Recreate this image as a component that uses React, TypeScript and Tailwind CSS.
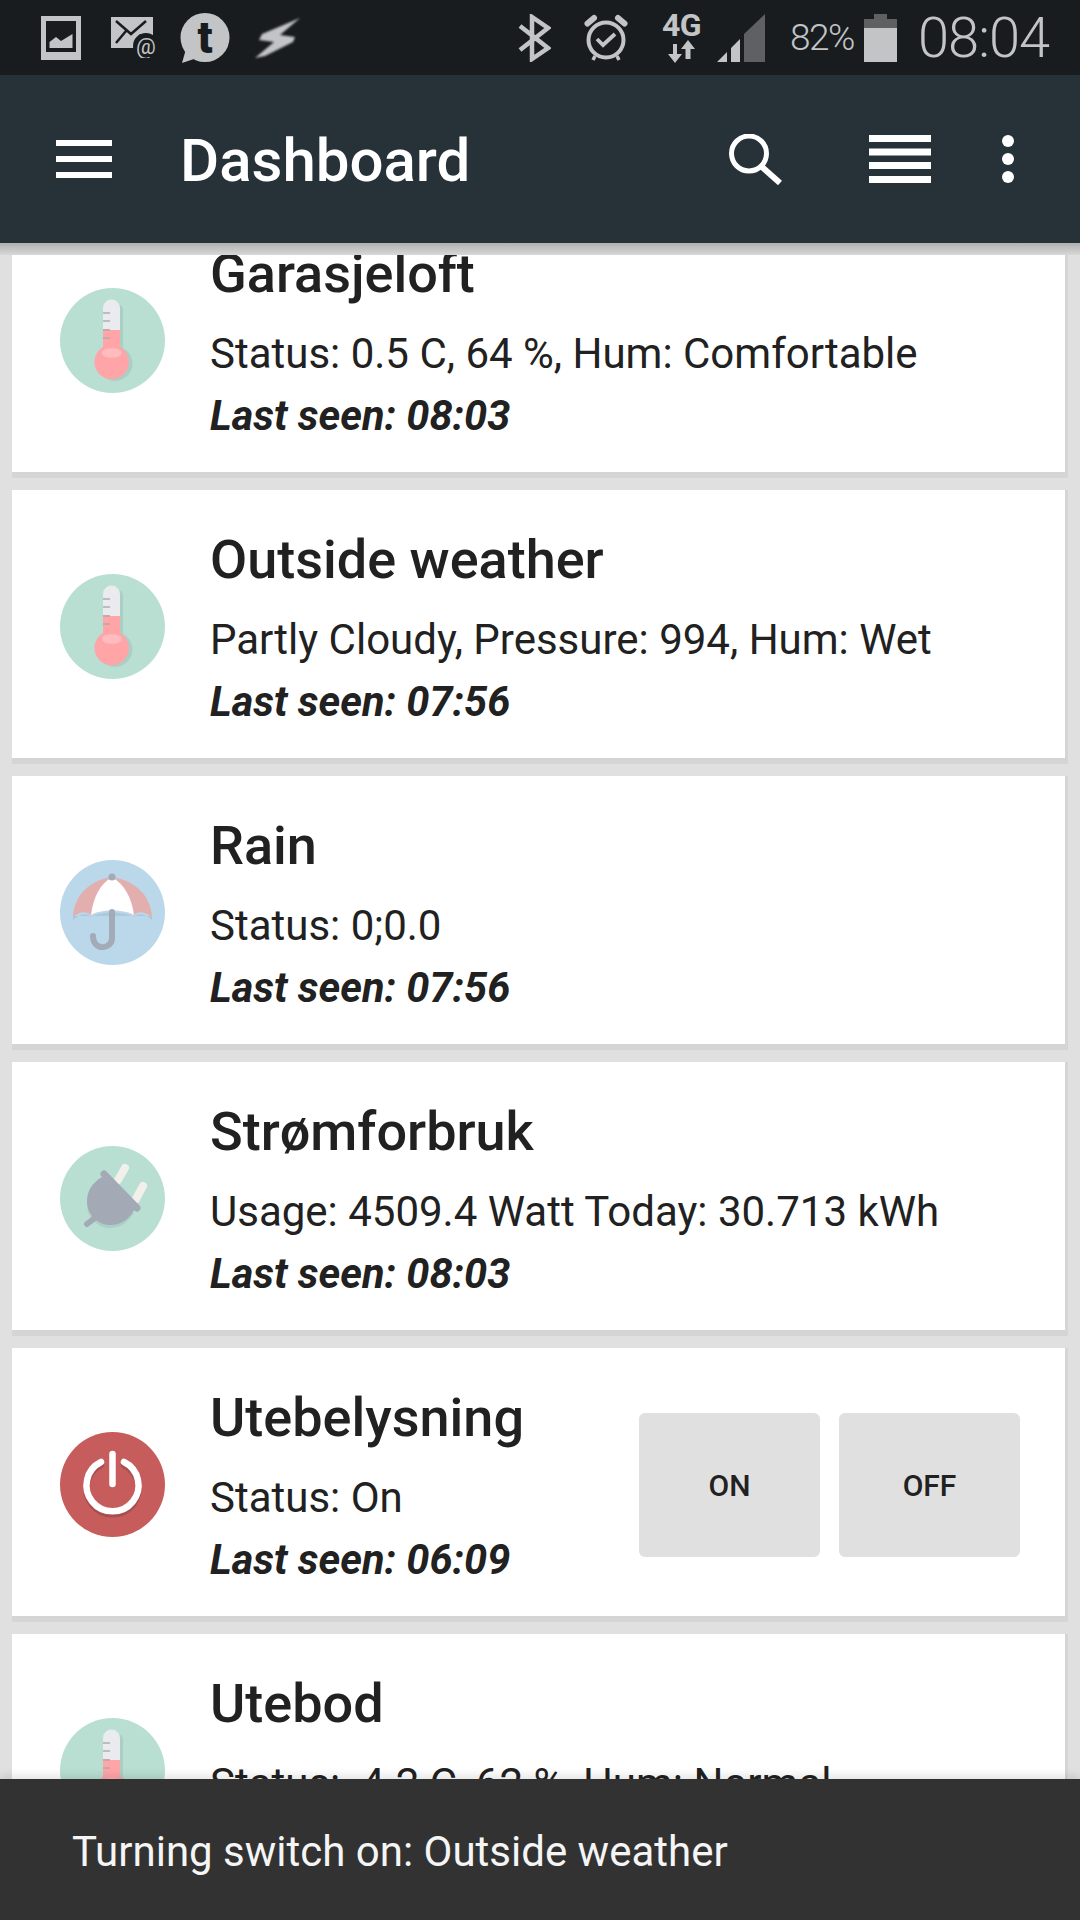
const font = { fontFamily: "Roboto, sans-serif" };

function Thermometer() {
  return (
    <svg viewBox="0 0 105 105" className="h-full w-full">
      <circle cx="52.5" cy="52.5" r="52.5" fill="#b9dfd3" />
      <path d="M47 20a9 9 0 0 1 16 0V60a17.5 17.5 0 1 1-16 0Z" fill="#a6c8bf" opacity="0.7" />
      <path d="M43 20a8.5 8.5 0 0 1 17 0V42H43Z" fill="#e9ebef" />
      <rect x="43" y="42" width="17" height="20" fill="#ffa5a8" />
      <circle cx="51.7" cy="74" r="17.3" fill="#ffa5a8" />
      <ellipse cx="51.7" cy="65" rx="10" ry="4.8" fill="#ffbcbf" />
      <g fill="#bdbcc2">
        <rect x="43" y="24" width="7" height="2" />
        <rect x="43" y="32" width="7" height="2" />
        <rect x="43" y="41" width="7" height="2" fill="#c9a6aa" />
        <rect x="43" y="49" width="7" height="2" fill="#c9a6aa" />
      </g>
    </svg>
  );
}

function Umbrella() {
  return (
    <svg viewBox="0 0 105 105" className="h-full w-full">
      <circle cx="52.5" cy="52.5" r="52.5" fill="#bbd8ea" />
      <path d="M13 60C22 53 28 53 31 57C40 51 64 51 74 57C78 53 84 53 92 60V56H13Z" fill="#a9cadc" />
      <path d="M13 57C14 35 30 20 52 17C74 20 91 35 92 57C84 51 78 51 74 55C64 49 40 49 31 55C26 51 20 51 13 57Z" fill="#e3aeae" />
      <path d="M31 55C33 38 40 24 52 17C64 24 72 38 74 55C64 49 40 49 31 55Z" fill="#ffffff" />
      <path d="M52 52V78C52 90 33 91 33 76" fill="none" stroke="#a4abb8" strokeWidth="6" strokeLinecap="round" />
      <circle cx="52" cy="17" r="3.6" fill="#a4abb8" />
    </svg>
  );
}

function Plug() {
  return (
    <svg viewBox="0 0 105 105" className="h-full w-full">
      <circle cx="52.5" cy="52.5" r="52.5" fill="#b9dfd3" />
      <path d="M44 33C33 39 27 47 27 58C27 72 38 82 50 82C60 82 68 76 74 67Z" fill="#a6c8bf" opacity="0.7" />
      <path d="M58 34L65 22M76 53L83 40" stroke="#f2f0eb" strokeWidth="8" strokeLinecap="round" />
      <path d="M42 31C32 37 27 45 27 55C27 69 38 79 50 79C61 79 70 73 75 62Z" fill="#a4a9b6" />
      <path d="M44 28L77 62" stroke="#a4a9b6" strokeWidth="7" strokeLinecap="round" />
      <path d="M36 71L27 78" stroke="#a4a9b6" strokeWidth="6" strokeLinecap="round" />
    </svg>
  );
}

function Power() {
  return (
    <svg viewBox="0 0 105 105" className="h-full w-full">
      <circle cx="52.5" cy="52.5" r="52.5" fill="#c75c5c" />
      <path d="M41 33A26 26 0 1 0 64 33" fill="none" stroke="#a84e50" strokeWidth="6.5" strokeLinecap="round" />
      <path d="M41 30A26 26 0 1 0 64 30" fill="none" stroke="#ffffff" strokeWidth="6.5" strokeLinecap="round" />
      <path d="M52.5 22V52" stroke="#ffffff" strokeWidth="6.5" strokeLinecap="round" />
    </svg>
  );
}

function Card({
  icon,
  title,
  status,
  seen,
  buttons,
}: {
  icon: React.ReactNode;
  title: string;
  status: string;
  seen: string;
  buttons?: boolean;
}) {
  return (
    <div className="flex h-[274px] items-center border-r-[3px] border-b-[6px] border-[#d5d5d5] bg-white pl-[48px]">
      <div className="mt-[5px] h-[105px] w-[105px] shrink-0">{icon}</div>
      <div className="ml-[45px] h-full flex-1 pt-[40px] text-[#212121]">
        <div className="mb-[18px] text-[54px] leading-[60px] font-medium">{title}</div>
        <div className="text-[42px] leading-[64px]">{status}</div>
        <div className="text-[41.5px] leading-[60px] font-bold italic">Last seen: {seen}</div>
      </div>
      {buttons && (
        <div className="mt-[5px] mr-[45px] flex gap-[19px]">
          <button className="h-[144px] w-[181px] rounded-[6px] bg-[#e0e0e0] pt-[2px] text-[30px] font-medium text-[#212121]">ON</button>
          <button className="h-[144px] w-[181px] rounded-[6px] bg-[#e0e0e0] pt-[2px] text-[30px] font-medium text-[#212121]">OFF</button>
        </div>
      )}
    </div>
  );
}

function StatusBar() {
  return (
    <div className="flex h-[75px] shrink-0 items-center bg-[#181c1f] pl-[41px] text-[#c2c4c6]">
      <svg viewBox="0 0 40 44" className="h-[44px] w-[40px]">
        <path d="M0 0H40V44H0Z M5 5V36H35V5Z" fill="#c2c4c6" fillRule="evenodd" />
        <path d="M8.5 32V26L15 21L20 25L31.5 18V32Z" fill="#c2c4c6" />
      </svg>
      <svg viewBox="0 0 46 41" className="ml-[30px] h-[41px] w-[46px]">
        <rect width="42" height="31" fill="#c2c4c6" />
        <path d="M5 4L20 17L35 4M5 26L15 14M38 26L28 18" stroke="#181c1f" strokeWidth="2.5" fill="none" />
        <circle cx="35" cy="29" r="13" fill="#181c1f" />
        <text x="35" y="37" textAnchor="middle" fontSize="22" fill="#c2c4c6" fontFamily="Roboto">@</text>
      </svg>
      <svg viewBox="0 0 50 50" className="ml-[23px] h-[50px] w-[50px]">
        <circle cx="25" cy="24.5" r="24.5" fill="#c2c4c6" />
        <path d="M6 36L2 50L17 45Z" fill="#c2c4c6" />
        <text x="25" y="40" textAnchor="middle" fontSize="44" fontWeight="900" fill="#181c1f" fontFamily="Roboto">t</text>
      </svg>
      <svg viewBox="0 0 45 40" className="ml-[25px] h-[40px] w-[45px] blur-[0.8px]">
        <path d="M45 0L7 16L4 22L19 24L0 40L10 38L38 24L40 19L25 17Z" fill="#c2c4c6" />
      </svg>
      <svg viewBox="0 0 33 48" className="ml-[218px] h-[48px] w-[33px]" fill="none" stroke="#c2c4c6" strokeWidth="4.5">
        <path d="M2 12L30 34L14 45V3L30 14L2 36" />
      </svg>
      <svg viewBox="0 0 44 47" className="ml-[33px] h-[47px] w-[44px]" fill="none" stroke="#c2c4c6">
        <circle cx="22" cy="26" r="17.5" strokeWidth="4" />
        <path d="M13 25L19 31L31 20" strokeWidth="3.8" />
        <path d="M3.5 9.5L10 4M40.5 9.5L34 4" strokeWidth="6" strokeLinecap="round" />
        <path d="M11 42L9 46M33 42L35 46" strokeWidth="3.5" />
      </svg>
      <div className="ml-[34px] flex h-[52px] w-[39px] flex-col items-center">
        <div className="h-[28px] text-[32px] leading-[26px] font-bold tracking-[-0.5px]">4G</div>
        <svg viewBox="0 0 27 23" className="h-[23px] w-[27px]" fill="#c2c4c6">
          <path d="M5 4H9V14H14L7 23L0 14H5Z M20 0L27 9H22.5V19H17.5V9H13Z" />
        </svg>
      </div>
      <svg viewBox="0 0 48 48" className="ml-[16px] h-[48px] w-[48px]">
        <path d="M0 48L10 38V48Z M14 34L23 25V48H14Z" fill="#c2c4c6" />
        <path d="M27 20L48 0V48H27Z" fill="#5e6062" />
      </svg>
      <span className="ml-[25px] w-[64px] text-[37px] font-light tracking-[-1.5px] whitespace-nowrap">82%</span>
      <svg viewBox="0 0 33 48" className="ml-[10px] h-[48px] w-[33px]">
        <path d="M10 0H23V5H33V14H0V5H10Z" fill="#5e6062" />
        <rect x="0" y="14" width="33" height="34" fill="#c2c4c6" />
      </svg>
      <span className="ml-[21px] text-[56px] leading-none font-light tracking-[-1px]">08:04</span>
    </div>
  );
}

function AppBar() {
  return (
    <div className="flex h-[168px] shrink-0 items-center bg-[#273138] text-white">
      <svg viewBox="0 0 56 38" className="ml-[56px] h-[38px] w-[56px]" fill="#ffffff">
        <rect width="56" height="6" />
        <rect y="16" width="56" height="6" />
        <rect y="32" width="56" height="6" />
      </svg>
      <h1 className="ml-[68px] flex-1 pt-[4px] text-[60px] font-medium">Dashboard</h1>
      <svg viewBox="0 0 53 51" className="h-[51px] w-[53px]" fill="none" stroke="#ffffff">
        <circle cx="20" cy="19.5" r="17.5" strokeWidth="5" />
        <path d="M33 33L51 49" strokeWidth="6" />
      </svg>
      <svg viewBox="0 0 62 48" className="ml-[87px] h-[48px] w-[62px]" fill="#ffffff">
        <rect width="62" height="7" />
        <rect y="13.5" width="62" height="7" />
        <rect y="27" width="62" height="7" />
        <rect y="41" width="62" height="7" />
      </svg>
      <svg viewBox="0 0 12 48" className="mr-[66px] ml-[71px] h-[48px] w-[12px]" fill="#ffffff">
        <circle cx="6" cy="6" r="6" />
        <circle cx="6" cy="24" r="6" />
        <circle cx="6" cy="42" r="6" />
      </svg>
    </div>
  );
}

export default function App() {
  return (
    <div className="relative flex h-[1920px] w-[1080px] flex-col overflow-hidden bg-[#e0e0e0]" style={font}>
      <StatusBar />
      <AppBar />
      <div className="h-[12px] shrink-0 bg-gradient-to-b from-[#b0b0b0] to-[#d8d8d8]" />
      <div className="flex-1 overflow-hidden">
        <div className="-mt-[51px] flex flex-col gap-[12px] pr-[12px] pl-[12px]">
          <Card icon={<Thermometer />} title="Garasjeloft" status="Status: 0.5 C, 64 %, Hum: Comfortable" seen="08:03" />
          <Card icon={<Thermometer />} title="Outside weather" status="Partly Cloudy, Pressure: 994, Hum: Wet" seen="07:56" />
          <Card icon={<Umbrella />} title="Rain" status="Status: 0;0.0" seen="07:56" />
          <Card icon={<Plug />} title="Strømforbruk" status="Usage: 4509.4 Watt Today: 30.713 kWh" seen="08:03" />
          <Card icon={<Power />} title="Utebelysning" status="Status: On" seen="06:09" buttons />
          <Card icon={<Thermometer />} title="Utebod" status={"Status:\u00a0 4.2 C, 62 %, Hum: Normal"} seen="08:03" />
        </div>
      </div>
      <div className="absolute right-0 bottom-0 left-0 flex h-[141px] items-center bg-[#323232] pt-[4px] pl-[72px] text-[42px] text-[#f5f5f5] shadow-[0_-4px_8px_rgba(0,0,0,0.1)]">
        Turning switch on: Outside weather
      </div>
    </div>
  );
}
